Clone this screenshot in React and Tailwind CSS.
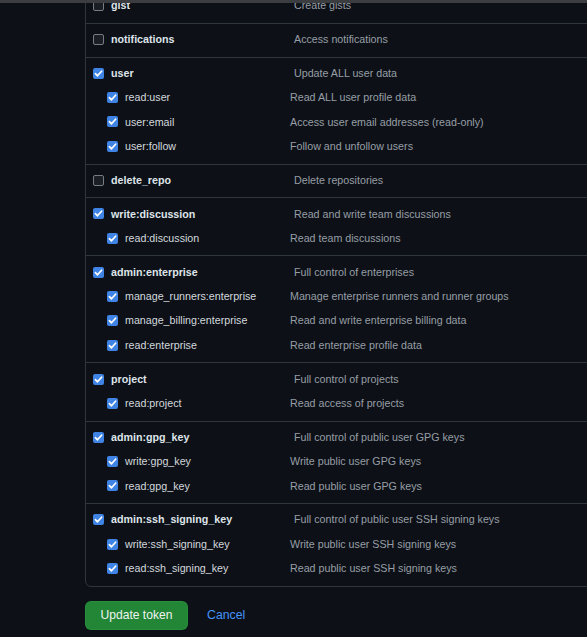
const SCOPES = [
  { name: "gist", desc: "Create gists", checked: false, subs: [] },
  { name: "notifications", desc: "Access notifications", checked: false, subs: [] },
  {
    name: "user",
    desc: "Update ALL user data",
    checked: true,
    subs: [
      ["read:user", "Read ALL user profile data"],
      ["user:email", "Access user email addresses (read-only)"],
      ["user:follow", "Follow and unfollow users"],
    ],
  },
  { name: "delete_repo", desc: "Delete repositories", checked: false, subs: [] },
  {
    name: "write:discussion",
    desc: "Read and write team discussions",
    checked: true,
    subs: [["read:discussion", "Read team discussions"]],
  },
  {
    name: "admin:enterprise",
    desc: "Full control of enterprises",
    checked: true,
    subs: [
      ["manage_runners:enterprise", "Manage enterprise runners and runner groups"],
      ["manage_billing:enterprise", "Read and write enterprise billing data"],
      ["read:enterprise", "Read enterprise profile data"],
    ],
  },
  {
    name: "project",
    desc: "Full control of projects",
    checked: true,
    subs: [["read:project", "Read access of projects"]],
  },
  {
    name: "admin:gpg_key",
    desc: "Full control of public user GPG keys",
    checked: true,
    subs: [
      ["write:gpg_key", "Write public user GPG keys"],
      ["read:gpg_key", "Read public user GPG keys"],
    ],
  },
  {
    name: "admin:ssh_signing_key",
    desc: "Full control of public user SSH signing keys",
    checked: true,
    subs: [
      ["write:ssh_signing_key", "Write public user SSH signing keys"],
      ["read:ssh_signing_key", "Read public user SSH signing keys"],
    ],
  },
];

function Checkbox({ checked }) {
  if (!checked) {
    return (
      <span className="block w-[11px] h-[11px] shrink-0 rounded-[2px] border border-[#767c84] bg-[#1b1f25]" />
    );
  }
  return (
    <span className="flex items-center justify-center w-[11px] h-[11px] shrink-0 rounded-[2px] bg-[#3f84e4]">
      <svg width="11" height="11" viewBox="0 0 11 11" fill="none">
        <path
          d="M2.4 5.7 L4.5 7.8 L8.6 3.2"
          stroke="#ffffff"
          strokeWidth="1.7"
          strokeLinecap="round"
          strokeLinejoin="round"
        />
      </svg>
    </span>
  );
}

function ScopeGroup({ scope }) {
  return (
    <div className="pt-[3.4px] pb-[5px]">
      {/* fila principal */}
      <div className="flex items-center h-[24.4px] pl-[7px]">
        <div className="flex items-center gap-[7px] w-[201px] shrink-0">
          <Checkbox checked={scope.checked} />
          <span className="font-bold text-[#dfe4ea]">{scope.name}</span>
        </div>
        <span className="text-[#979ea6]">{scope.desc}</span>
      </div>
      {scope.subs.map(([name, desc]) => (
        <div key={name} className="flex items-center h-[24.4px] pl-[21px]">
          <div className="flex items-center gap-[7px] w-[183px] shrink-0">
            <Checkbox checked={scope.checked} />
            <span className="text-[#d3d8de]">{name}</span>
          </div>
          <span className="text-[#979ea6]">{desc}</span>
        </div>
      ))}
    </div>
  );
}

export default function App() {
  return (
    <div
      className="relative w-[587px] h-[637px] overflow-hidden bg-[#0d1117] text-[10.7px] leading-none"
      style={{ fontFamily: '"Liberation Sans", Arial, sans-serif' }}
    >
      {/* borde del header fijo */}
      <div className="absolute top-0 left-0 right-0 h-[3px] bg-[#3b3d41] z-10" />

      <div className="pl-[85px]">
        <div className="w-[580px] mt-[-11px] border border-[#30363d] rounded-[6px] divide-y divide-[#30363d]">
          {SCOPES.map((scope) => (
            <ScopeGroup key={scope.name} scope={scope} />
          ))}
        </div>

        <div className="flex items-center mt-[14px]">
          <button className="w-[103px] h-[29px] rounded-[6px] bg-[#238636] border border-[#2ea043]/40 text-[#eef3f0] text-[12.1px]">
            Update token
          </button>
          <a className="ml-[19px] text-[#4493f8] text-[12.3px]">Cancel</a>
        </div>
      </div>
    </div>
  );
}
